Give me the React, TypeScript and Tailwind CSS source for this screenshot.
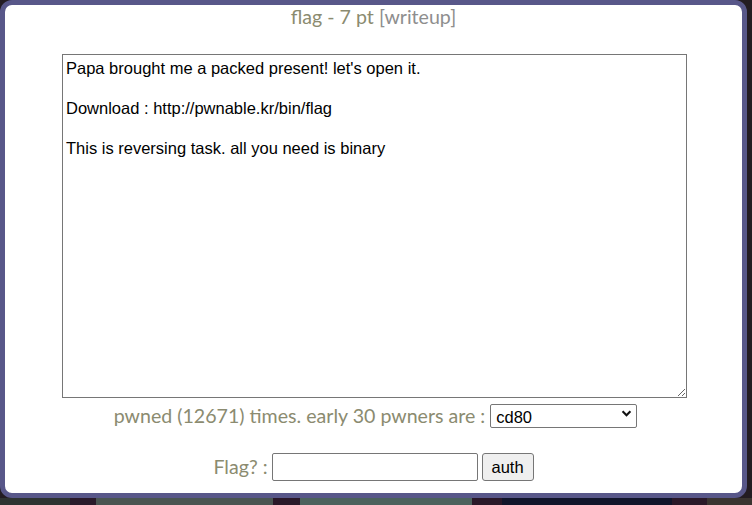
import { useState } from "react";

const STRIP = [
  { w: "w-[70px]", c: "bg-[#2e3331]" },
  { w: "w-[26px]", c: "bg-[#2a1a2a]" },
  { w: "w-[177px]", c: "bg-[#4a5551]" },
  { w: "w-[27px]", c: "bg-[#2a1828]" },
  { w: "w-[172px]", c: "bg-[#4c625d]" },
  { w: "w-[30px]", c: "bg-[#2a1828]" },
  { w: "w-[170px]", c: "bg-[#11152a]" },
  { w: "w-[35px]", c: "bg-[#2a1828]" },
  { w: "w-[45px]", c: "bg-[#3a3430]" },
];

const DESCRIPTION =
  "Papa brought me a packed present! let's open it.\n\nDownload : http://pwnable.kr/bin/flag\n\nThis is reversing task. all you need is binary";

const PWNERS = ["cd80", "dahye", "jwvps0", "juno", "hyeon"];

export default function App() {
  const [pwner, setPwner] = useState(PWNERS[0]);
  const [flag, setFlag] = useState("");

  return (
    <div className="flex h-[505px] w-[752px] flex-col overflow-hidden bg-[#231c22]">
      <div className="flex h-[498px] w-[747px] shrink-0 flex-col items-center rounded-[12px] border-[5px] border-[#585789] bg-white">
        <h1 className="mt-[1px] font-['Lato',sans-serif] text-[19.6px] leading-[22px] text-[#8b8b70]">
          flag - 7 pt <span className="text-[#8e8e8e]">[writeup]</span>
        </h1>

        <textarea
          defaultValue={DESCRIPTION}
          className="mt-[26px] ml-[2px] h-[344px] w-[625px] resize border border-[#767676] bg-white px-[3px] py-[3px] font-['Liberation_Sans',Arial,sans-serif] text-[16.5px] leading-[20px] text-black outline-none"
        />

        <div className="mt-[6px] ml-[4px] flex h-[24px] items-center font-['Lato',sans-serif] text-[19.6px] text-[#8b8b70]">
          <span>pwned (12671) times. early 30 pwners are :</span>
          <div className="relative ml-[5px]">
            <select
              value={pwner}
              onChange={(e) => setPwner(e.target.value)}
              className="h-[24px] w-[147px] appearance-none rounded-[2px] border border-[#767676] bg-white pl-[5px] font-['Liberation_Sans',Arial,sans-serif] text-[16.5px] text-black outline-none"
            >
              {PWNERS.map((p) => (
                <option key={p}>{p}</option>
              ))}
            </select>
            {/* native-looking chevron */}
            <svg
              viewBox="0 0 12 8"
              className="pointer-events-none absolute right-[5px] top-[9px] h-[7px] w-[11px]"
            >
              <path d="M1.5 1.5 6 6l4.5-4.5" fill="none" stroke="#111" strokeWidth="2.4" />
            </svg>
          </div>
        </div>

        <div className="mt-[25px] flex h-[28px] items-center font-['Lato',sans-serif] text-[19.6px] text-[#8b8b70]">
          <span>Flag? :</span>
          <input
            value={flag}
            onChange={(e) => setFlag(e.target.value)}
            className="ml-[4px] h-[28px] w-[206px] rounded-[2px] border border-[#767676] bg-white px-[3px] font-['Liberation_Sans',Arial,sans-serif] text-[16.5px] text-black outline-none"
          />
          <button
            type="button"
            className="ml-[4px] h-[28px] w-[52px] rounded-[3px] border border-[#767676] bg-[#efefef] font-['Liberation_Sans',Arial,sans-serif] text-[16.5px] text-black"
          >
            auth
          </button>
        </div>
      </div>

      <div className="flex h-[7px] shrink-0">
        {STRIP.map((s, i) => (
          <div key={i} className={`${s.w} ${s.c} h-full shrink-0`} />
        ))}
      </div>
    </div>
  );
}
